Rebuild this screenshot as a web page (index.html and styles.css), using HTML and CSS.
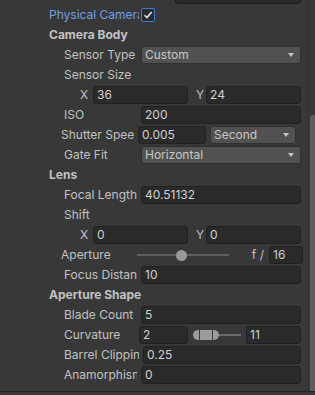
FILE: index.html
```html
<!DOCTYPE html>
<html>
<head>
<meta charset="utf-8">
<link rel="stylesheet" href="styles.css">
</head>
<body>
<div class="inspector">
  <div class="content">
    <div class="row"><div class="label"></div><div class="field top-field"></div></div>
    <div class="row"><div class="label blue">Physical Camera</div>
      <div class="check"><svg width="12" height="12" viewBox="0 0 12 12"><path d="M2.5 6.3 L5 8.6 L9.6 3" fill="none" stroke="#e8e8e8" stroke-width="1.5"/></svg></div>
    </div>
    <div class="row"><div class="label bold">Camera Body</div></div>
    <div class="row"><div class="label l2">Sensor Type</div><div class="field dropdown"><span>Custom</span><i class="arrow"></i></div></div>
    <div class="row"><div class="label l2">Sensor Size</div></div>
    <div class="row vec"><span class="axis">X</span><div class="field">36</div><span class="axis y">Y</span><div class="field">24</div></div>
    <div class="row"><div class="label l2">ISO</div><div class="field">200</div></div>
    <div class="row"><div class="label l2s">Shutter Speed</div><div class="field shutter">0.005</div><div class="field dropdown unit"><span>Second</span><i class="arrow"></i></div></div>
    <div class="row"><div class="label l2">Gate Fit</div><div class="field dropdown"><span>Horizontal</span><i class="arrow"></i></div></div>
    <div class="row"><div class="label bold">Lens</div></div>
    <div class="row"><div class="label l2">Focal Length</div><div class="field">40.51132</div></div>
    <div class="row"><div class="label l2">Shift</div></div>
    <div class="row vec"><span class="axis">X</span><div class="field">0</div><span class="axis y">Y</span><div class="field">0</div></div>
    <div class="row"><div class="label l2s ap">Aperture</div>
      <div class="slider"><div class="track"></div><div class="knob"></div></div>
      <span class="fstop">f /</span><div class="field fval">16</div>
    </div>
    <div class="row"><div class="label l2">Focus Distance</div><div class="field">10</div></div>
    <div class="row"><div class="label bold">Aperture Shape</div></div>
    <div class="row"><div class="label l2">Blade Count</div><div class="field">5</div></div>
    <div class="row"><div class="label l2 curv">Curvature</div><div class="field cmin">2</div>
      <div class="minmax"><div class="mm-thumb"><i class="cap l"></i><i class="mid"></i><i class="cap r"></i></div><div class="mm-track"></div></div>
      <div class="field">11</div>
    </div>
    <div class="row"><div class="label l2 barrel">Barrel Clipping</div><div class="field">0.25</div></div>
    <div class="row"><div class="label l2">Anamorphism</div><div class="field">0</div></div>
  </div>
  <div class="scrollbar"><div class="thumb"></div></div>
</div>
</body>
</html>
```
FILE: styles.css
```css
* { box-sizing: border-box; margin: 0; padding: 0; }
html, body { background: #383838; }
body {
  margin: 0;
  width: 315px;
  height: 395px;
  overflow: hidden;
  font-family: Inter, "Noto Sans", sans-serif;
  font-size: 12px;
  color: #c2c2c2;
}
.inspector {
  display: grid;
  grid-template-columns: 1fr 8px;
  height: 392px;
  border-bottom: 1px solid #232323;
  overflow: hidden;
}
.content {
  display: flex;
  flex-direction: column;
  gap: 2px;
  margin-top: -14px;
  padding-right: 7px;
}
.row {
  display: flex;
  align-items: center;
  height: 18px;
}
.label {
  flex: 0 0 137px;
  margin-right: 4px;
  padding-left: 49px;
  white-space: nowrap;
  overflow: hidden;
  line-height: 18px;
}
.label.l2 { padding-left: 64px; }
.label.l2s { padding-left: 61px; flex-basis: 134px; }
.label.bold { font-weight: 700; flex: 1 1 auto; overflow: visible; }
.label.blue { color: #6f9fe0; flex-basis: 139px; margin-right: 2px; }
.label.curv { flex-basis: 135px; }
.label.barrel { flex-basis: 139px; }
.field {
  flex: 1;
  min-width: 0;
  height: 18px;
  background: #2a2a2a;
  border: 1px solid #212121;
  border-radius: 3px;
  padding-left: 3px;
  line-height: 16px;
  color: #d0d0d0;
  white-space: nowrap;
  overflow: hidden;
}
.top-field { margin-left: 34px; }
.dropdown {
  background: #515151;
  border-color: #303030;
  display: flex;
  align-items: center;
  justify-content: space-between;
  padding: 0 6px 0 3px;
  color: #c8c8c8;
}
.arrow {
  width: 0;
  height: 0;
  border-left: 3.5px solid transparent;
  border-right: 3.5px solid transparent;
  border-top: 4px solid #c4c4c4;
}
.check {
  flex: 0 0 14px;
  width: 14px;
  height: 14px;
  border: 1px solid #3f7fd8;
  border-radius: 2px;
  background: #2a2a2a;
  display: flex;
  align-items: center;
  justify-content: center;
}
.vec { padding-left: 79px; }
.axis { flex: 0 0 14px; line-height: 18px; padding-left: 1px; }
.axis.y { flex-basis: 18px; padding-left: 8px; }
.shutter { flex: 0 0 68px; }
.unit { flex: 0 0 86px; margin-left: 4px; margin-right: 4px; }
.slider {
  position: relative;
  flex: 0 0 92px;
  height: 18px;
  margin-left: -1px;
}
.track {
  position: absolute;
  left: 0; right: 0;
  top: 8px;
  height: 2px;
  background: #5e5e5e;
}
.knob {
  position: absolute;
  left: 39px;
  top: 4px;
  width: 11px;
  height: 11px;
  border-radius: 50%;
  background: #999;
}
.fstop { flex: 0 0 40px; text-align: right; padding-right: 5px; line-height: 18px; }
.fval { flex: 0 0 34px; margin-right: -2px; }
.cmin { flex: 0 0 49px; }
.minmax {
  flex: 0 0 58px;
  display: flex;
  align-items: center;
  padding-left: 5px;
  padding-right: 5px;
}
.mm-thumb { display: flex; height: 10px; gap: 1px; }
.mm-thumb i { display: block; background: #9c9c9c; height: 10px; }
.mm-thumb .cap.l { width: 6px; border-radius: 5px 0 0 5px; }
.mm-thumb .mid { width: 12px; }
.mm-thumb .cap.r { width: 6px; border-radius: 0 5px 5px 0; }
.mm-track { flex: 1; height: 2px; background: #6a6a6a; }
.scrollbar {
  padding-top: 115px;
  border-left: 1px solid #303030;
}
.thumb {
  height: 100%;
  margin-left: 1px;
  background: #5c5c5c;
  border-radius: 3px 0 0 0;
}
```
